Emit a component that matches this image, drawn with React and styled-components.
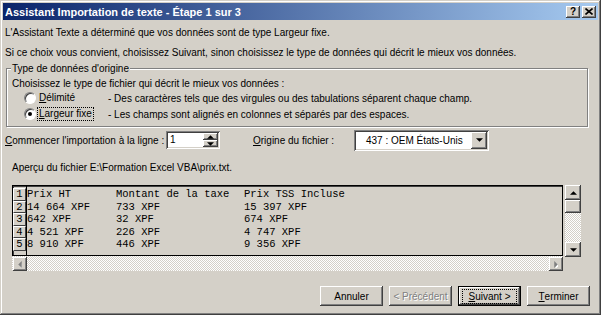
import React from 'react';
import styled, { createGlobalStyle } from 'styled-components';

const GlobalStyle = createGlobalStyle`
  html, body { margin: 0; padding: 0; background: #fff; }
  body {
    font-family: "Liberation Sans", Arial, sans-serif;
    font-size: 10px;
    color: #000;
  }
`;

const raised = `
  background: #d4d0c8;
  box-shadow: inset -1px -1px #404040, inset 1px 1px #fff, inset -2px -2px #808080, inset 2px 2px #d4d0c8;
`;

const sunken = `
  box-shadow: inset 1px 1px #808080, inset -1px -1px #fff, inset 2px 2px #404040, inset -2px -2px #d4d0c8;
`;

const Window = styled.div`
  width: 601px;
  height: 315px;
  box-sizing: border-box;
  padding: 3px;
  background: #d4d0c8;
  box-shadow: inset -1px -1px #404040, inset 1px 1px #d4d0c8, inset -2px -2px #808080, inset 2px 2px #fff;
  display: flex;
  flex-direction: column;
`;

const TitleBar = styled.div`
  height: 17px;
  display: flex;
  align-items: center;
  justify-content: space-between;
  padding: 0 2px 0 2px;
  background: linear-gradient(to right, #0a246a, #a6caf0);
`;

const Title = styled.span`
  color: #fff;
  font-weight: bold;
  font-size: 11px;
`;

const CaptionButtons = styled.div`
  display: flex;
  gap: 2px;
`;

const CaptionButton = styled.div`
  ${raised}
  width: 14px;
  height: 12px;
  display: flex;
  align-items: center;
  justify-content: center;
  font-weight: bold;
  font-size: 10px;
  line-height: 12px;
`;

const Body = styled.div`
  padding: 0 2px;
  display: flex;
  flex-direction: column;
`;

const Line = styled.div`
  line-height: 13px;
  margin-top: ${({ $mt }) => $mt || 0}px;
  margin-left: ${({ $ml }) => $ml || 0}px;
  white-space: nowrap;
`;

const Group = styled.fieldset`
  margin: 3px 0 0 1px;
  width: 582px;
  box-sizing: border-box;
  padding: 0 0 4px 5px;
  border: 1px solid #808080;
  box-shadow: inset 1px 1px #fff, 1px 1px #fff;
`;

const Legend = styled.legend`
  padding: 0 1px;
  margin-left: -1px;
  line-height: 13px;
  background: #d4d0c8;
`;

const RadioRow = styled.div`
  display: flex;
  align-items: center;
  height: 16px;
  padding-left: 12px;
`;

const RadioCircle = styled.span`
  width: 12px;
  height: 12px;
  flex-shrink: 0;
  box-sizing: border-box;
  border-radius: 50%;
  background: #fff;
  border: 1px solid;
  border-color: #808080 #fff #fff #808080;
  box-shadow: inset 1px 1px #404040;
  display: flex;
  align-items: center;
  justify-content: center;
  &::after {
    content: '';
    width: 4px;
    height: 4px;
    border-radius: 50%;
    background: ${({ $checked }) => ($checked ? '#000' : 'transparent')};
  }
`;

const RadioLabel = styled.span`
  width: 71px;
  margin-left: 1px;
  line-height: 12px;
  padding: 0 1px;
  box-sizing: border-box;
  span {
    display: inline-block;
    padding: 0 1px;
    outline: ${({ $focus }) => ($focus ? '1px dotted #000' : 'none')};
  }
`;

const Key = styled.u`
  text-decoration: underline;
`;

const ImportRow = styled.div`
  display: flex;
  align-items: center;
  margin-top: 3px;
  height: 20px;
`;

const FieldLabel = styled.span`
  width: ${({ $w }) => $w}px;
  flex-shrink: 0;
  margin-left: ${({ $ml }) => $ml || 0}px;
  white-space: nowrap;
`;

const Spinner = styled.div`
  width: 54px;
  height: 18px;
  box-sizing: border-box;
  background: #fff;
  ${sunken}
  display: flex;
  align-items: stretch;
  padding: 2px;
`;

const SpinValue = styled.span`
  flex: 1;
  padding-left: 2px;
  line-height: 14px;
`;

const SpinButtons = styled.div`
  display: flex;
  flex-direction: column;
  width: 15px;
`;

const SpinButton = styled.div`
  ${raised}
  flex: 1;
  display: flex;
  align-items: center;
  justify-content: center;
`;

const Combo = styled.div`
  width: 135px;
  height: 21px;
  box-sizing: border-box;
  background: #fff;
  ${sunken}
  padding: 2px;
  display: flex;
  align-items: stretch;
`;

const ComboValue = styled.span`
  flex: 1;
  padding-left: 10px;
  line-height: 17px;
`;

const ArrowButton = styled.div`
  ${raised}
  width: ${({ $w }) => $w || 16}px;
  height: ${({ $h }) => $h || 16}px;
  flex-shrink: 0;
  display: flex;
  align-items: center;
  justify-content: center;
`;

const Preview = styled.div`
  margin: 11px 0 0 7px;
  display: grid;
  grid-template-columns: 551px 16px;
  grid-template-rows: 71px 15px;
  column-gap: 2px;
`;

const PreviewBox = styled.div`
  border: 1px solid #000;
  box-shadow: inset 1px 1px #404040;
  display: flex;
  overflow: hidden;
`;

const RowHeads = styled.div`
  width: 13px;
  border-right: 1px solid #000;
  padding-top: 2px;
  display: flex;
  flex-direction: column;
`;

const RowHead = styled.div`
  height: 12.5px;
  box-sizing: border-box;
  border: 1px solid;
  border-color: #fff #404040 #404040 #fff;
  font-family: "Liberation Mono", "Courier New", monospace;
  font-size: 10.5px;
  line-height: 10px;
  text-align: center;
`;

const Rows = styled.div`
  flex: 1;
  padding-top: 2px;
  font-family: "Liberation Mono", "Courier New", monospace;
  font-size: 10.5px;
`;

const DataRow = styled.div`
  display: grid;
  grid-template-columns: 89px 128px 1fr;
  height: 12.5px;
  line-height: 12.5px;
  white-space: pre;
`;

const VScroll = styled.div`
  grid-row: 1;
  grid-column: 2;
  height: 72px;
  display: flex;
  flex-direction: column;
  background: repeating-conic-gradient(#fff 0 25%, #d4d0c8 0 50%) 0 0 / 2px 2px;
`;

const Thumb = styled.div`
  ${raised}
  height: 13px;
`;

const Track = styled.div`
  flex: 1;
`;

const HScroll = styled.div`
  grid-row: 2;
  grid-column: 1;
  display: flex;
  justify-content: space-between;
  padding: 1px 0 0 1px;
  background: repeating-conic-gradient(#fff 0 25%, #d4d0c8 0 50%) 0 0 / 2px 2px;
`;

const Buttons = styled.div`
  display: flex;
  justify-content: flex-end;
  gap: 6px;
  margin: 15px 6px 0 0;
`;

const Button = styled.div`
  ${raised}
  width: 63px;
  height: 20px;
  box-sizing: border-box;
  display: flex;
  align-items: center;
  justify-content: center;
  color: ${({ $disabled }) => ($disabled ? '#808080' : '#000')};
  text-shadow: ${({ $disabled }) => ($disabled ? '1px 1px #fff' : 'none')};
  ${({ $default }) =>
    $default &&
    `outline: 1px solid #000; outline-offset: -1px;
     box-shadow: inset -2px -2px #404040, inset 2px 2px #fff, inset -3px -3px #808080;`}
`;

const Focus = styled.span`
  outline: 1px dotted #000;
  padding: 1px 6px;
`;

const Tri = ({ dir, color = '#000' }) => {
  const pts = {
    up: '0,3 3,0 6,3',
    down: '0,0 6,0 3,3',
    left: '3,0 3,6 0,3',
    right: '0,0 0,6 3,3',
  }[dir];
  const vertical = dir === 'up' || dir === 'down';
  return (
    <svg width={vertical ? 7 : 4} height={vertical ? 4 : 7} viewBox={vertical ? '0 0 6 3' : '0 0 3 6'}>
      {color !== '#000' && (
        <polygon points={pts} fill="#fff" transform="translate(1 1)" />
      )}
      <polygon points={pts} fill={color} />
    </svg>
  );
};

const rows = [
  ['Prix HT', 'Montant de la taxe', 'Prix TSS Incluse'],
  ['14 664 XPF', '733 XPF', '15 397 XPF'],
  ['642 XPF', '32 XPF', '674 XPF'],
  ['4 521 XPF', '226 XPF', '4 747 XPF'],
  ['8 910 XPF', '446 XPF', '9 356 XPF'],
];

export default function App() {
  return (
    <>
      <GlobalStyle />
      <Window>
        <TitleBar>
          <Title>Assistant Importation de texte - Étape 1 sur 3</Title>
          <CaptionButtons>
            <CaptionButton>?</CaptionButton>
            <CaptionButton>
              <svg width="8" height="7" viewBox="0 0 8 7">
                <path d="M0.5 0.5 L7.5 6.5 M7.5 0.5 L0.5 6.5" stroke="#000" strokeWidth="1.6" />
              </svg>
            </CaptionButton>
          </CaptionButtons>
        </TitleBar>

        <Body>
          <Line $mt={6}>L'Assistant Texte a déterminé que vos données sont de type Largeur fixe.</Line>
          <Line $mt={7}>
            Si ce choix vous convient, choisissez Suivant, sinon choisissez le type de données qui décrit le mieux vos données.
          </Line>

          <Group>
            <Legend>Type de données d'origine</Legend>
            <Line $mt={2}>Choisissez le type de fichier qui décrit le mieux vos données :</Line>
            <RadioRow>
              <RadioCircle />
              <RadioLabel>
                <span><Key>D</Key>élimité</span>
              </RadioLabel>
              <span>- Des caractères tels que des virgules ou des tabulations séparent chaque champ.</span>
            </RadioRow>
            <RadioRow>
              <RadioCircle $checked />
              <RadioLabel $focus>
                <span><Key>L</Key>argeur fixe</span>
              </RadioLabel>
              <span>- Les champs sont alignés en colonnes et séparés par des espaces.</span>
            </RadioRow>
          </Group>

          <ImportRow>
            <FieldLabel $w={161}><Key>C</Key>ommencer l'importation à la ligne :</FieldLabel>
            <Spinner>
              <SpinValue>1</SpinValue>
              <SpinButtons>
                <SpinButton><Tri dir="up" /></SpinButton>
                <SpinButton><Tri dir="down" /></SpinButton>
              </SpinButtons>
            </Spinner>
            <FieldLabel $w={101} $ml={33}><Key>O</Key>rigine du fichier :</FieldLabel>
            <Combo>
              <ComboValue>437 : OEM États-Unis</ComboValue>
              <ArrowButton $w={16} $h={17}><Tri dir="down" /></ArrowButton>
            </Combo>
          </ImportRow>

          <Line $mt={11} $ml={7}>Aperçu du fichier E:\Formation Excel VBA\prix.txt.</Line>

          <Preview>
            <PreviewBox>
              <RowHeads>
                {rows.map((_, i) => (
                  <RowHead key={i}>{i + 1}</RowHead>
                ))}
              </RowHeads>
              <Rows>
                {rows.map((r, i) => (
                  <DataRow key={i}>
                    {r.map((c, j) => (
                      <span key={j}>{c}</span>
                    ))}
                  </DataRow>
                ))}
              </Rows>
            </PreviewBox>
            <VScroll>
              <ArrowButton $w={16} $h={15}><Tri dir="up" /></ArrowButton>
              <Thumb />
              <Track />
              <ArrowButton $w={16} $h={15}><Tri dir="down" /></ArrowButton>
            </VScroll>
            <HScroll>
              <ArrowButton $w={14} $h={14}><Tri dir="left" color="#808080" /></ArrowButton>
              <ArrowButton $w={14} $h={14}><Tri dir="right" color="#808080" /></ArrowButton>
            </HScroll>
          </Preview>

          <Buttons>
            <Button>Annuler</Button>
            <Button $disabled>&lt; Précédent</Button>
            <Button $default>
              <Focus><Key>S</Key>uivant &gt;</Focus>
            </Button>
            <Button><Key>T</Key>erminer</Button>
          </Buttons>
        </Body>
      </Window>
    </>
  );
}
